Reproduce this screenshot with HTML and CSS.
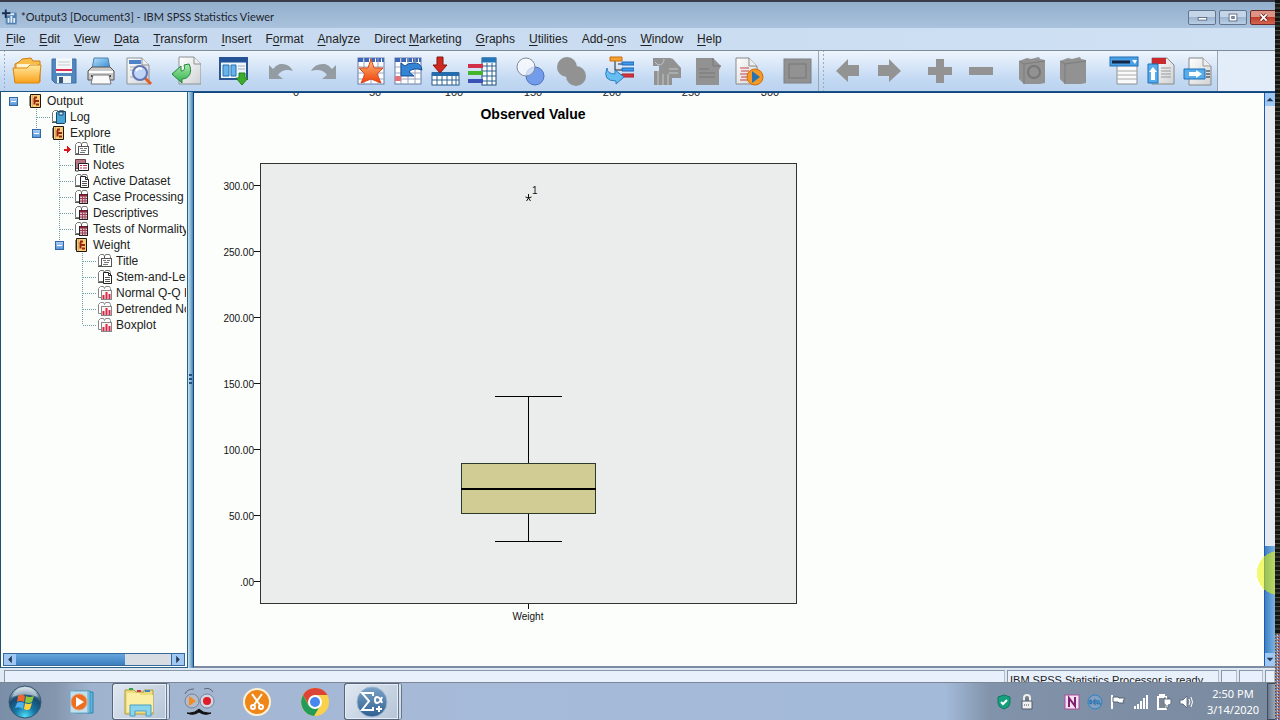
FILE: index.html
```html
<!DOCTYPE html>
<html lang="en">
<head>
<meta charset="utf-8">
<title>*Output3 [Document3] - IBM SPSS Statistics Viewer</title>
<link rel="stylesheet" href="styles.css">
</head>
<body>
<svg class="defs" aria-hidden="true">
  <defs>
    <linearGradient id="gSky" x1="0" y1="0" x2="1" y2="1"><stop offset="0" stop-color="#b5e1fb"/><stop offset="1" stop-color="#2f86d2"/></linearGradient>
    <linearGradient id="gFold" x1="0" y1="0" x2="0" y2="1"><stop offset="0" stop-color="#ffe9a0"/><stop offset="1" stop-color="#f9a11b"/></linearGradient>
    <linearGradient id="gPage" x1="0" y1="0" x2="1" y2="1"><stop offset="0" stop-color="#ffffff"/><stop offset="1" stop-color="#cfd2d4"/></linearGradient>
    <linearGradient id="gStar" x1="0" y1="0" x2="0" y2="1"><stop offset="0" stop-color="#fbc08f"/><stop offset=".5" stop-color="#f58040"/><stop offset="1" stop-color="#f0400c"/></linearGradient>
    <linearGradient id="gGreen" x1="0" y1="0" x2="0" y2="1"><stop offset="0" stop-color="#a8ecac"/><stop offset="1" stop-color="#2fb04a"/></linearGradient>
    <radialGradient id="gOrb" cx=".5" cy=".95" r=".9"><stop offset="0" stop-color="#4fe0f8"/><stop offset=".35" stop-color="#1678a8"/><stop offset=".7" stop-color="#174a70"/><stop offset="1" stop-color="#b5c7d4"/></radialGradient>
    <linearGradient id="gSpss" x1="0" y1="0" x2="0" y2="1"><stop offset="0" stop-color="#7ba3c8"/><stop offset="1" stop-color="#2f5f90"/></linearGradient>
    <symbol id="book" viewBox="0 0 16 14"><path d="M2.500 .5h10v13h-10z" fill="#f7cf78" stroke="#20160c"/><path d="M4.500 1v12" stroke="#e0a860"/><path d="M1 3h2M1 5h2M1 7h2M1 9h2M1 11h2" stroke="#222"/><path d="M6 3.500h3M6.500 4v6.500M7 7h4M8 10.500h3" stroke="#9a2413" stroke-width="2" fill="none"/></symbol>
    <symbol id="pages" viewBox="0 0 16 14"><path d="M1.500 11.500v-9l2-2h3l1 2 1-2h4l1 2v9z" fill="#fff" stroke="#777"/><path d="M1 12.500h7M7.500 2v10" stroke="#555"/></symbol>
    <symbol id="title" viewBox="0 0 16 14"><use href="#pages"/><rect x="4.500" y="4.500" width="10" height="8" fill="#fff" stroke="#555"/><path d="M6 6.500h3m1 0h3M7 8.500h5M6 10.500h5" stroke="#777"/></symbol>
    <symbol id="table" viewBox="0 0 16 14"><use href="#pages"/><rect x="5.500" y="4.500" width="8" height="9" fill="#e5c4cd" stroke="#222"/><path d="M6 5.500h7" stroke="#94213d" stroke-width="2"/><path d="M6 8.500h7M6 11h7M8.500 6v7M11 6v7" stroke="#9c4055"/></symbol>
    <symbol id="textpage" viewBox="0 0 16 14"><use href="#pages"/><path d="M6.500 2.500h5l3 3v8h-8zM11.500 2.500v3h3" fill="#fff" stroke="#222"/><path d="M8 7.500h5M8 9.500h5M8 11.500h5" stroke="#555"/></symbol>
    <symbol id="bars" viewBox="0 0 16 14"><path d="M1.500 11.500v-9l2-2h3l1 2 1-2h4l1 2v9z" fill="#fff" stroke="#888"/><rect x="4.500" y="4.500" width="10" height="9" fill="#fff4f5" stroke="#888"/><path d="M6.500 13v-4M9.500 13V6M12.500 13V8" stroke="#d42a48" stroke-width="2"/></symbol>
    <symbol id="notes" viewBox="0 0 16 14"><path d="M1.500 1.500h10v9h-10z" fill="#b77885" stroke="#70404b"/><path d="M1.500 4v9h3" fill="none" stroke="#333"/><path d="M4.500 5.500h10v7h-10z" fill="#fff" stroke="#222"/><path d="M6 7.500h2m1 0h4M6 10h2m1 0h4" stroke="#b3344c"/></symbol>
    <symbol id="log" viewBox="0 0 16 14"><use href="#pages"/><path d="M5.500 2.500l1-1h8v11l-1 1h-8z" fill="#49a4d8" stroke="#174766"/><path d="M8 2h4v3H8z" fill="#d9eef8" stroke="#174766"/></symbol>
    <symbol id="page" viewBox="0 0 30 30"><path d="M4 2h15l7 7v19H4z" fill="url(#gPage)" stroke="#8d9296"/><path d="M19 2v7h7" fill="#eee" stroke="#8d9296"/></symbol>
    <symbol id="grid" viewBox="0 0 30 30"><rect x="2" y="2" width="26" height="26" fill="#fff" stroke="#667ba8"/><path d="M2 4h26" stroke="#3d68b8" stroke-width="4" stroke-dasharray="5 1"/><path d="M2 11h26M2 17h26M2 23h26M8 2v26M15 2v26M22 2v26" stroke="#97a3bf"/></symbol>
    <symbol id="greybook" viewBox="0 0 30 30"><path d="M2 5l8-3 4 1 8-2 1 2 5 1v23l-5 1H7l-5-5z" fill="#929292"/><path d="M7 8v20M7 8l21-3M2 5l5 3" stroke="#7c7c7c" fill="none"/></symbol>
  </defs>
</svg>
<div class="screen">
<div class="desktop">
  <header class="titlebar">
    <svg class="app-icon" viewBox="0 0 16 16"><rect x="4" y="3" width="12" height="13" rx="2" fill="#4f7fb0" stroke="#88a7c5"/><path d="M7 14V9M10 14V7M13 14V9M5 5h8" stroke="#e2edf8" stroke-width="2"/><path d="M4 0v9M0 4h9" stroke="#172f52" stroke-width="2"/></svg>
    <h1>*Output3 [Document3] - IBM SPSS Statistics Viewer</h1>
    <div class="winbtns">
      <button aria-label="Minimize"><svg viewBox="0 0 28 15"><rect x="9.500" y="7.500" width="10" height="3" fill="#fff" stroke="#56657a"/></svg></button>
      <button aria-label="Maximize"><svg viewBox="0 0 28 15"><rect x="9.500" y="3.500" width="9" height="8" fill="#fff" stroke="#56657a"/><rect x="12.500" y="6.500" width="3" height="2" fill="#8ea8c6" stroke="#56657a"/></svg></button>
      <button class="close" aria-label="Close"><svg viewBox="0 0 28 15"><path d="M10 4l7 7M17 4l-7 7" stroke="#6c2a22" stroke-width="4"/><path d="M10 4l7 7M17 4l-7 7" stroke="#fff" stroke-width="2"/></svg></button>
    </div>
  </header>
  <nav class="menubar">
    <button><u>F</u>ile</button><button><u>E</u>dit</button><button><u>V</u>iew</button><button><u>D</u>ata</button><button><u>T</u>ransform</button><button><u>I</u>nsert</button><button>F<u>o</u>rmat</button><button><u>A</u>nalyze</button><button>Direct <u>M</u>arketing</button><button><u>G</u>raphs</button><button><u>U</u>tilities</button><button>Add-<u>o</u>ns</button><button><u>W</u>indow</button><button><u>H</u>elp</button>
  </nav>
  <div class="toolbars">
    <div class="toolbar" role="toolbar" aria-label="Main">
      <div class="group">
        <button aria-label="Open"><svg viewBox="0 0 30 30"><path d="M3 8l4-2 3-3 9-1 2 3h7v21H3z" fill="#f9bd4b" stroke="#ce7b10"/><path d="M5 8h20v10H5z" fill="#fff4cf"/><path d="M1 12h14l3-3h11l-2 18H3z" fill="url(#gFold)" stroke="#d8860f"/></svg></button>
        <button aria-label="Save"><svg viewBox="0 0 30 30"><path d="M3 3h24v24H6l-3-3z" fill="#4f86be" stroke="#3d6fa6"/><rect x="7" y="2" width="16" height="15" fill="#f4f7fa"/><path d="M9 6h12M9 9h12" stroke="#c3c9d0"/><path d="M7 14h16" stroke="#e02b52" stroke-width="2"/><path d="M8 20h14v7H8z" fill="#eef1f4"/><path d="M10 21h4v6h-4z" fill="#38577c"/></svg></button>
        <button aria-label="Print"><svg viewBox="0 0 30 30"><path d="M8 2h14l2 11H6z" fill="url(#gSky)" stroke="#4e80a8"/><path d="M6 11h18l4 4v9H2v-9z" fill="#c9c9c9" stroke="#555"/><path d="M3 16h24" stroke="#fff" stroke-width="2"/><path d="M5 20h20" stroke="#444" stroke-width="2"/><path d="M7 19h16l2 9H5z" fill="#fafafa" stroke="#777"/></svg></button>
        <button aria-label="Print Preview"><svg viewBox="0 0 30 30"><use href="#page"/><path d="M6 4h12v4H6z" fill="#4c83c9"/><path d="M7 11h12M7 14h8M7 21h6" stroke="#aaa"/><path d="M21 21l7 7" stroke="#e25c25" stroke-width="3"/><circle cx="17" cy="17" r="7" fill="#bad4f7" fill-opacity=".9" stroke="#6276b4" stroke-width="2"/><path d="M13 15q2-4 6-2" stroke="#fff" fill="none" stroke-width="2"/></svg></button>
      </div>
      <div class="group"><button aria-label="Export"><svg viewBox="0 0 30 30"><path d="M8 1h15l7 7v20H8z" fill="url(#gPage)" stroke="#8d9296"/><path d="M23 1v7h7" fill="#eee" stroke="#8d9296"/><path d="M18 8c4 8 0 15-7 15v4L1 18l9-8v5c4 0 4-3 3-6z" fill="url(#gGreen)" stroke="#218439"/></svg></button></div>
      <div class="group"><button aria-label="Recall Dialog"><svg viewBox="0 0 30 30"><rect x="1" y="2" width="27" height="21" fill="#edf6fd" stroke="#2c5690" stroke-width="2"/><path d="M1 4h27" stroke="#235299" stroke-width="5"/><path d="M4 9h6v11H4zM12 9h5v11h-5z" fill="#67b4ec" stroke="#286eae"/><path d="M19 10h7M19 13h7" stroke="#aab"/><path d="M20 17h6v5h3l-6 7-6-7h3z" fill="#3cad2d" stroke="#238219"/></svg></button></div>
      <div class="group loose">
        <button disabled aria-label="Undo"><svg viewBox="0 0 30 30"><path d="M2 9v14h14l-5-4q5-7 15-4-4-8-13-7-4 1-7 5z" fill="#939ba3"/></svg></button>
        <button disabled aria-label="Redo"><svg viewBox="0 0 30 30"><path d="M28 9v14H14l5-4Q14 12 3 15q4-8 14-7 4 1 7 5z" fill="#939ba3"/></svg></button>
      </div>
      <div class="group">
        <button aria-label="Go to Data"><svg viewBox="0 0 30 30"><use href="#grid"/><path d="M15 3l3 9h9l-6 6 4 9-10-4-10 4 4-9-6-6h9z" fill="url(#gStar)" stroke="#d84b18"/></svg></button>
        <button aria-label="Go to Case"><svg viewBox="0 0 30 30"><use href="#grid"/><path d="M2 20h6v5H2z" fill="#e87078"/><path d="M8 7v13h13l-5-4q4-5 13-2-1-8-9-7-5 0-8 3z" fill="#3384d2" stroke="#174e99"/></svg></button>
        <button aria-label="Go to Variable"><svg viewBox="0 0 30 30"><rect x="2" y="17" width="27" height="12" fill="#fff" stroke="#24588c"/><path d="M2 18h27" stroke="#246cab" stroke-width="4"/><path d="M2 24h27M7 20v9M12 20v9M17 20v9M22 20v9M26 20v9" stroke="#2c638f"/><path d="M7 1h6v8h4l-7 8-7-8h4z" fill="#cf281f" stroke="#871610"/></svg></button>
        <button aria-label="Variables"><svg viewBox="0 0 30 30"><rect x="15" y="2" width="14" height="27" fill="#fff" stroke="#1d4b79"/><path d="M15 4h14" stroke="#2478ba" stroke-width="5"/><path d="M15 10h14M15 15h14M15 20h14M15 25h14M20 7v22M25 7v22" stroke="#2b628f"/><path d="M1 10h15" stroke="#d22f48" stroke-width="4"/><path d="M1 17h15" stroke="#43b52c" stroke-width="4"/><path d="M1 25h15" stroke="#3a52b5" stroke-width="4"/></svg></button>
      </div>
      <div class="group loose">
        <button aria-label="Use Variable Sets"><svg viewBox="0 0 30 30"><circle cx="20" cy="20" r="9" fill="#739ceb" stroke="#496fc0"/><circle cx="11" cy="11" r="9" fill="#fff" fill-opacity=".65" stroke="#808b9c"/></svg></button>
        <button disabled aria-label="Show All Variables"><svg viewBox="0 0 30 30"><circle cx="11" cy="11" r="10" fill="#929292"/><circle cx="20" cy="20" r="10" fill="#929292"/></svg></button>
      </div>
      <div class="group"><button aria-label="Select Last Output"><svg viewBox="0 0 30 30"><path d="M11 4v10h8M14 8h5M14 19h5" stroke="#222" fill="none"/><path d="M6 1h12v4H6z" fill="#f5a12d" stroke="#c66e10"/><path d="M18 6h12v3H18zM18 12h12v3H18z" fill="#419aeb" stroke="#1c62b8"/><path d="M18 18h12v3H18z" fill="#df3440" stroke="#a2202a"/><path d="M3 12q0 6 8 6v-4l9 7-8 7v-3q-14 0-9-13z" fill="#66bef3" stroke="#2e7ec0"/></svg></button></div>
      <div class="group loose">
        <button disabled aria-label="Designate Window"><svg viewBox="0 0 30 30"><path d="M1 2h17l3 1 8 9v10H20v7H2V15h5v-5H1z" fill="#929292"/><path d="M12 3q0 6-6 6l-3-3M6 15v14M11 18v11M16 18v11M17 13h9M17 17h9" stroke="#c4c7ca" fill="none"/></svg></button>
        <button disabled aria-label="Associate"><svg viewBox="0 0 30 30"><path d="M3 2h17l8 8-2 4v15H3z" fill="#929292"/><path d="M6 13h10M6 17h16M6 21h16M20 2v8h8" stroke="#777" fill="none"/></svg></button>
        <button aria-label="Run Script"><svg viewBox="0 0 30 30"><path d="M2 2h13l8 8v18H2z" fill="url(#gPage)" stroke="#888"/><path d="M15 2v8h8" fill="#eee" stroke="#888"/><path d="M6 12h9M7 15h8M6 18h8M7 21h6M6 24h8" stroke="#c44" stroke-width="1"/><circle cx="21" cy="21" r="8" fill="#f49a25" stroke="#d16d08"/><path d="M18 15l8 6-8 6z" fill="#2a72ae"/></svg></button>
      </div>
      <div class="group"><button disabled aria-label="Edit"><svg viewBox="0 0 30 30"><rect x="2" y="3" width="27" height="24" fill="#929292" stroke="#7c8086"/><rect x="7" y="8" width="17" height="14" fill="none" stroke="#777"/></svg></button></div>
    </div>
    <div class="toolbar outline-bar" role="toolbar" aria-label="Outline">
      <div class="group loose">
        <button disabled aria-label="Promote"><svg viewBox="0 0 30 30"><path d="M3 15L15 3v6h11v11H15v6z" fill="#939393"/></svg></button>
        <button disabled aria-label="Demote"><svg viewBox="0 0 30 30"><path d="M27 15L15 3v6H4v11h11v6z" fill="#939393"/></svg></button>
      </div>
      <div class="group loose">
        <button disabled aria-label="Expand"><svg viewBox="0 0 30 30"><path d="M11 3h8v8h8v8h-8v8h-8v-8H3v-8h8z" fill="#939393"/></svg></button>
        <button disabled aria-label="Collapse"><svg viewBox="0 0 30 30"><path d="M3 11h24v8H3z" fill="#939393"/></svg></button>
      </div>
      <div class="group loose">
        <button disabled aria-label="Show"><svg viewBox="0 0 30 30"><use href="#greybook"/><circle cx="17" cy="16" r="6" fill="none" stroke="#777" stroke-width="2"/></svg></button>
        <button disabled aria-label="Hide"><svg viewBox="0 0 30 30"><use href="#greybook"/></svg></button>
      </div>
      <div class="group">
        <button aria-label="Insert Heading"><svg viewBox="0 0 30 30"><path d="M8 9h20v19H8z" fill="#fafafa" stroke="#8b9096"/><path d="M8 15h20M8 19h20M8 23h20" stroke="#aaa"/><rect x="1" y="1" width="28" height="9" fill="#4aa0e4" stroke="#216fb4"/><path d="M3 6h18" stroke="#122747" stroke-width="3"/><path d="M23 4h5l-2 4z" fill="#fff"/></svg></button>
        <button aria-label="Insert Title"><svg viewBox="0 0 30 30"><path d="M6 2h15l7 7v19H6z" fill="url(#gPage)" stroke="#888"/><path d="M6 2h14v6H6z" fill="#c82a2d"/><path d="M15 12h10M15 15h10M15 18h10M15 21h10" stroke="#999"/><path d="M2 8h10v19H2z" fill="#58acea" stroke="#1a71bc"/><path d="M7 11l4 5H9v8H5v-8H3z" fill="#fff"/></svg></button>
        <button aria-label="Insert Text"><svg viewBox="0 0 30 30"><path d="M6 2h14l8 8v19H6z" fill="url(#gPage)" stroke="#888"/><path d="M20 2v8h8" fill="#eee" stroke="#999"/><path d="M23 15h4M23 18h4M23 21h4" stroke="#222"/><path d="M1 13h21v10H1z" fill="#58acea" stroke="#1a71bc"/><path d="M6 16h7v-2l6 4-6 4v-2H6z" fill="#fff"/></svg></button>
      </div>
    </div>
  </div>
  <main class="workspace">
    <aside class="outline">
      <div class="tree">
        <ul>
          <li><div class="row"><button class="toggle" aria-label="Collapse Output"></button><svg><use href="#book"/></svg><span>Output</span></div>
            <ul>
              <li><div class="row"><i></i><svg><use href="#log"/></svg><span>Log</span></div></li>
              <li><div class="row"><button class="toggle" aria-label="Collapse Explore"></button><svg><use href="#book"/></svg><span>Explore</span></div>
                <ul>
                  <li><div class="row"><i class="current"></i><svg><use href="#title"/></svg><span>Title</span></div></li>
                  <li><div class="row"><i></i><svg><use href="#notes"/></svg><span>Notes</span></div></li>
                  <li><div class="row"><i></i><svg><use href="#textpage"/></svg><span>Active Dataset</span></div></li>
                  <li><div class="row"><i></i><svg><use href="#table"/></svg><span>Case Processing</span></div></li>
                  <li><div class="row"><i></i><svg><use href="#table"/></svg><span>Descriptives</span></div></li>
                  <li><div class="row"><i></i><svg><use href="#table"/></svg><span>Tests of Normality</span></div></li>
                  <li><div class="row"><button class="toggle" aria-label="Collapse Weight"></button><svg><use href="#book"/></svg><span>Weight</span></div>
                    <ul>
                      <li><div class="row"><i></i><svg><use href="#title"/></svg><span>Title</span></div></li>
                      <li><div class="row"><i></i><svg><use href="#textpage"/></svg><span>Stem-and-Le</span></div></li>
                      <li><div class="row"><i></i><svg><use href="#bars"/></svg><span>Normal Q-Q P</span></div></li>
                      <li><div class="row"><i></i><svg><use href="#bars"/></svg><span>Detrended No</span></div></li>
                      <li><div class="row"><i></i><svg><use href="#bars"/></svg><span>Boxplot</span></div></li>
                    </ul>
                  </li>
                </ul>
              </li>
            </ul>
          </li>
        </ul>
      </div>
      <div class="hscroll"><button aria-label="Scroll left"><svg viewBox="0 0 12 12"><path d="M8 2v8L4 6z"/></svg></button><div class="thumb"></div><div class="rest"></div><button aria-label="Scroll right"><svg viewBox="0 0 12 12"><path d="M4 2v8l4-4z"/></svg></button></div>
    </aside>
    <div class="splitter"><span></span></div>
    <section class="viewer">
      <div class="canvas">
        <svg class="chart" width="640" height="560" viewBox="0 0 640 560" role="img" aria-label="Boxplot of Weight">
          <g class="tick-text" text-anchor="middle"><text x="102" y="3">0</text><text x="181" y="3">50</text><text x="260" y="3">100</text><text x="339" y="3">150</text><text x="418" y="3">200</text><text x="497" y="3">250</text><text x="576" y="3">300</text></g>
          <text class="axis-title" x="339" y="26" text-anchor="middle">Observed Value</text>
          <rect x="66.500" y="70.500" width="536" height="440" fill="#ebecec" stroke="#333"/>
          <path d="M60 92.500h6M60 158.500h6M60 224.500h6M60 290.500h6M60 356.500h6M60 422.500h6M60 488.500h6M334.500 511v5" stroke="#111"/>
          <g class="axis-text" text-anchor="end"><text x="60" y="97">300.00</text><text x="60" y="163">250.00</text><text x="60" y="229">200.00</text><text x="60" y="295">150.00</text><text x="60" y="361">100.00</text><text x="60" y="427">50.00</text><text x="60" y="493">.00</text></g>
          <path d="M301 303.500h67M334.500 303v68M334.500 421v28M301 448.500h67" stroke="#000"/>
          <rect x="267.500" y="370.500" width="134" height="50" fill="#d1cc94" stroke="#2c3a2c"/>
          <path d="M267 396h135" stroke="#000" stroke-width="2"/>
          <path d="M334.500 105v-4M334.500 105l-3-1M334.500 105l3-1M334.500 105l-2 3M334.500 105l2 3" stroke="#111"/>
          <text class="axis-text" x="338" y="101">1</text>
          <text class="axis-text" x="334" y="527" text-anchor="middle">Weight</text>
        </svg>
      </div>
      <div class="vscroll"><button aria-label="Scroll up"><svg viewBox="0 0 12 12"><path d="M2 8h8L6 4z"/></svg></button><div class="rest"></div><div class="thumb"></div><button aria-label="Scroll down"><svg viewBox="0 0 12 12"><path d="M2 4h8L6 8z"/></svg></button><span class="pointer-halo"></span></div>
    </section>
  </main>
  <div class="status"><span class="fill"></span><span class="msg">IBM SPSS Statistics Processor is ready</span><span class="c1"></span><span class="c2"></span><span class="c3"></span></div>
  <footer class="taskbar">
    <button class="start" aria-label="Start"><svg viewBox="0 0 34 34"><circle cx="17" cy="17" r="16" fill="url(#gOrb)" stroke="#35566e"/><path d="M4 12Q8 2 17 2t13 10q-13-5-26 0z" fill="#fff" opacity=".45"/><path d="M10 11q3-3 7 0l-1 6q-4-2-7 0z" fill="#f1662c"/><path d="M18 11q4 2 8 0l-2 6q-4 2-7 0z" fill="#8dc63f"/><path d="M9 18q3-2 7 0l-1 6q-4-3-8-1z" fill="#4fb2ee"/><path d="M17 18q3 2 7 0l-2 6q-3 2-6 0z" fill="#ffd23c"/></svg></button>
    <button class="task" aria-label="Media Player"><svg viewBox="0 0 34 34"><path d="M12 7h15v21H12z" fill="#5bb3e0" stroke="#3184b0"/><path d="M9 6h15v22H9z" fill="#8cd0ef" stroke="#3d91bb"/><path d="M4 6h18v22H4z" fill="#c0e0ee" stroke="#6ea7c2"/><circle cx="13" cy="17" r="8" fill="#ee6d1f" stroke="#e4a27c"/><path d="M10 12l8 5-8 5z" fill="#fff"/></svg></button>
    <button class="task open stacked" aria-label="File Explorer"><svg viewBox="0 0 34 34"><path d="M2 8V5h9l2 2h8V5h9v24H2z" fill="#eddd7c" stroke="#b89a3c"/><path d="M4 8h12l2 2h12v17H4z" fill="#fbeea5"/><path d="M6 4h4" stroke="#32a84a" stroke-width="2"/><path d="M14 6h4" stroke="#cc3c32" stroke-width="2"/><path d="M22 6h5" stroke="#388acc" stroke-width="2"/><path d="M7 31V20h21v11h-5v-5H12v5z" fill="#8bd4ee" stroke="#4b9ec0"/></svg></button>
    <button class="task" aria-label="Screen Recorder"><svg viewBox="0 0 34 34"><circle cx="10" cy="16" r="7" fill="#b4bccb" stroke="#74839a"/><circle cx="25" cy="16" r="7" fill="#d2d8e2" stroke="#74839a"/><path d="M7 11l7 5-7 5z" fill="#f28b22"/><circle cx="25" cy="16" r="4" fill="#e01b2c"/><path d="M3 9q2-5 9-5M22 4q6-2 9 3" fill="none" stroke="#5d6675"/><path d="M5 28h3q5 0 9-4 4 4 9 4h3q-6 3-12-1-6 4-12 1z" fill="#111" stroke="#111"/></svg></button>
    <button class="task" aria-label="Screenshot Tool"><svg viewBox="0 0 34 34"><circle cx="17" cy="17" r="13" fill="#ee8717" stroke="#fff1d6" stroke-width="2"/><path d="M12 9l8 11M22 9l-8 11" stroke="#fff" stroke-width="2"/><circle cx="13" cy="22" r="2" fill="none" stroke="#fff" stroke-width="2"/><circle cx="21" cy="22" r="2" fill="none" stroke="#fff" stroke-width="2"/></svg></button>
    <button class="task" aria-label="Chrome"><svg viewBox="0 0 34 34"><circle cx="17" cy="17" r="14" fill="#fbd14b"/><path d="M17 3A14 14 0 0 1 29.500 10H17L11 20 5 10A14 14 0 0 1 17 3z" fill="#dc4437"/><path d="M5 10A14 14 0 0 0 16 31l6-10H11z" fill="#249c59"/><circle cx="17" cy="17" r="7" fill="#fff"/><circle cx="17" cy="17" r="5" fill="#4688f0"/></svg></button>
    <button class="task open stacked" aria-label="SPSS"><svg viewBox="0 0 34 34"><circle cx="17" cy="17" r="15" fill="url(#gSpss)" stroke="#9cb8d2"/><path d="M18 11V8H7l7 8-7 9h11v-3" fill="none" stroke="#fff" stroke-width="2"/><path d="M27 12q-2 6-5 6-2 0-2-3t2-3q3 0 5 6M24 21v6M21 24h6" fill="none" stroke="#fff" stroke-width="2"/></svg></button>
    <div class="tray">
      <svg viewBox="0 0 16 16"><path d="M8 1l6 2v6q0 4-6 6-6-2-6-6V3z" fill="#16a07b" stroke="#0d7a65"/><path d="M5 8l2 2 4-4" fill="none" stroke="#fff" stroke-width="2"/></svg>
      <svg class="after" viewBox="0 0 16 16"><path d="M5 7V4q0-3 3-3t3 3v3" fill="#737e89" stroke="#eee" stroke-width="2"/><path d="M3 7h10v8H3z" fill="#f1f1f1" stroke="#4c5866"/><path d="M5 11h6" stroke="#444" stroke-dasharray="1 1"/></svg>
      <svg viewBox="0 0 16 16"><rect x="1" y="1" width="14" height="14" fill="#f4e1f2" stroke="#ab4f9d"/><path d="M5 13V4l6 8V3" fill="none" stroke="#80206f" stroke-width="2"/></svg>
      <svg viewBox="0 0 16 16"><circle cx="8" cy="8" r="7" fill="#829fbd" stroke="#2583ca" stroke-width="1"/><path d="M3 6v4q2 0 2-2t-2-2M9 6H7v4h2M7 8h2M10 6v4h1M12 6v4h2" fill="none" stroke="#1668ad"/></svg>
      <svg viewBox="0 0 16 16"><path d="M2 1v14" stroke="#fff" stroke-width="2"/><path d="M3 3h5l1 1h6l-2 3 1 2H9L8 8H3z" fill="#fff" stroke="#566373"/></svg>
      <svg viewBox="0 0 16 16"><path d="M1 12h2v3H1zM4 10h2v5H4zM7 7h2v8H7zM10 4h2v11h-2zM13 1h2v14h-2z" fill="#fff"/></svg>
      <svg viewBox="0 0 16 16"><path d="M2 3h8v12H2zM4 1h4v2H4z" fill="#7b8795" stroke="#fff" stroke-width="2"/><path d="M8 5h7v4q0 2-3 2v3h-2v-3q-2 0-2-2zM9 3v2M13 3v2" fill="#fff" stroke="#637183"/></svg>
      <svg viewBox="0 0 16 16"><path d="M1 6h3l4-4v12l-4-4H1z" fill="#fff" stroke="#637183"/><path d="M10 5q2 3 0 6M12 3q3 5 0 10" fill="none" stroke="#fff"/></svg>
    </div>
    <div class="clock"><time>2:50 PM</time><span>3/14/2020</span></div>
    <button class="peek" aria-label="Show desktop"></button>
  </footer>
</div>
<div class="edge"></div>
</div>
</body>
</html>
```
FILE: styles.css
```css
* { box-sizing: border-box; }
body { margin: 0; font-family: "Liberation Sans", Arial, sans-serif; font-size: 12px; color: #222; }
button { font: inherit; color: inherit; border: 0; padding: 0; background: none; }
ul { list-style: none; margin: 0; padding: 0; }
.defs { position: absolute; width: 0; height: 0; }
.screen { display: flex; height: 100vh; overflow: hidden; }
.desktop { flex: 1; min-width: 0; display: flex; flex-direction: column; background: #cfe0f2; }

.titlebar { flex: none; height: 28px; display: flex; align-items: center; gap: 4px; padding: 4px 0 0 2px; border-top: 2px solid #383c48; background: linear-gradient(#93afcc, #a9c2dd); overflow: hidden; }
.titlebar h1 { flex: 1; margin: 0; font: 11px/16px Lato, "Noto Sans", sans-serif; color: #1c232c; }
.app-icon { width: 15px; height: 16px; }
.winbtns { flex: none; display: flex; gap: 3px; margin-right: -3px; }
.winbtns button { width: 28px; height: 15px; border: 1px solid #62758d; border-radius: 2px; background: linear-gradient(#c4d5e8 45%, #9db6d1 50%, #b9cfe5); }
.winbtns .close { border-color: #6c2b2b; background: linear-gradient(#dc9486 45%, #c03f2b 50%, #d46550); }
.winbtns svg { display: block; width: 26px; height: 13px; }

.menubar { flex: none; height: 22px; display: flex; gap: 14px; padding-left: 6px; background: linear-gradient(90deg, #c5d8ee, #cfe1f3); }
.menubar button { line-height: 22px; }
.menubar u { text-decoration-thickness: 1px; text-underline-offset: 2px; }

.toolbars { flex: none; display: flex; height: 42px; background: #e2edf9; border-top: 1px solid #808b98; border-bottom: 1px solid #1b5588; }
.toolbar { display: flex; align-items: center; gap: 18px; padding: 0 6px 0 12px; border-right: 1px solid #98a5b4; background: radial-gradient(circle, #9eacbe 1px, transparent 1px) 3px 2px / 3px 4px repeat-y, linear-gradient(#eef5fd, #c3d9f3 70%, #bbd3ef); }
.outline-bar { gap: 21px; padding-left: 14px; padding-right: 4px; }
.group { display: flex; gap: 7px; }
.loose { gap: 11px; }
.toolbar button, .toolbar svg { display: block; width: 30px; height: 30px; }

.workspace { flex: 1; min-height: 0; display: flex; }
.outline { flex: none; width: 188px; display: flex; flex-direction: column; border: 1px solid #2b6288; border-top: 0; border-left-color: #1f506e; background: #fcfefc; padding: 0 1px 1px; }
.tree { flex: 1; overflow: hidden; padding-top: 1px; white-space: nowrap; }
.tree > ul { padding-left: 4px; }
.tree li li { background: repeating-linear-gradient(#6f9ea8 0 1px, transparent 1px 2px) 7px 0 / 1px 100% no-repeat; }
.tree li li:last-child { background-size: 1px 8px; }
.tree ul ul { padding-left: 23px; }
.row { display: flex; align-items: center; height: 16px; }
.row svg { flex: none; width: 16px; height: 14px; margin-right: 3px; }
.row i { flex: none; width: 13px; height: 1px; margin: 0 1px 0 8px; background: repeating-linear-gradient(90deg, #6f9ea8 0 1px, transparent 1px 2px); }
.row i.current { height: 7px; background: linear-gradient(#d81a20, #d81a20) 4px 3px / 4px 2px no-repeat, conic-gradient(from 225deg at 100% 50%, #d81a20 90deg, transparent 0) 7px 0 / 4px 7px no-repeat; }
.toggle { flex: none; width: 9px; height: 9px; margin: 0 10px 0 3px; border: 1px solid #3268a6; background: linear-gradient(#fff, #fff) 1px 3px / 5px 1px no-repeat, linear-gradient(#a9cdf3, #5896db); }

.hscroll { flex: none; height: 13px; display: flex; margin: 0 1px; border: 1px solid #37689a; }
.hscroll button, .vscroll button { flex: none; width: 12px; height: 11px; background: #9fc8f4; }
.hscroll svg, .vscroll svg { display: block; width: 12px; height: 11px; fill: #243850; }
.thumb { background: linear-gradient(#66a4dc, #3b7fc0); }
.hscroll .thumb { flex: 7; }
.rest { background: #d8dce3; }
.hscroll .rest { flex: 3; border-right: 1px solid #37689a; }

.splitter { flex: none; width: 5px; display: flex; align-items: center; background: linear-gradient(90deg, #c8e6ee, #7dafd2 60%, #4c83b8); }
.splitter span { width: 3px; height: 12px; margin-left: 1px; background: repeating-linear-gradient(#204f80 0 2px, transparent 2px 4px); }
.viewer { flex: 1; min-width: 0; display: flex; border: 1px solid #12437c; border-right: 0; border-bottom: 2px solid #7e8ca3; }
.canvas { flex: 1; min-width: 0; overflow: hidden; background: #fcfefc; }
.chart { display: block; }
.tick-text { font-size: 11px; fill: #222; }
.axis-text { font-size: 10px; fill: #111; }
.axis-title { font-size: 14px; font-weight: bold; fill: #000; }
.vscroll { position: relative; flex: none; width: 11px; display: flex; flex-direction: column; border-left: 1px solid #1d58b2; }
.vscroll button, .vscroll svg { width: 10px; }
.vscroll button { height: 13px; }
.vscroll .rest { flex: 78; background: #e6e9f0; }
.vscroll .thumb { flex: 19; background: linear-gradient(90deg, #3c80c2, #7db2e3); }
.pointer-halo { position: absolute; right: 0; bottom: 71px; width: 18px; height: 44px; background: radial-gradient(circle at 22px 50%, #eaf500 22px, transparent 22px); opacity: .55; }

.status { flex: none; height: 14px; display: flex; gap: 2px; padding: 2px 0 0 4px; overflow: hidden; background: #dfe9f3; }
.status span { flex: none; height: 18px; border: 1px solid #8a97a6; border-right-color: #b4bfcb; background: #e8f1fb; line-height: 18px; }
.status .fill { flex: 1; }
.status .msg { width: 212px; padding-left: 2px; font-size: 11px; white-space: nowrap; }
.status .c1 { width: 16px; }
.status .c2 { width: 24px; }
.status .c3 { width: 10px; }

.taskbar { flex: none; height: 38px; display: flex; align-items: center; overflow: hidden; border-top: 1px solid #7c8694; background: linear-gradient(90deg, #7b8ea8, #8496ae 55px, #a0b3ce 90px, #a6bad8 400px, #a3bad9 945px, #8193aa 990px, #7a8a9f); }
.taskbar svg { display: block; }
.start { width: 50px; }
.start svg, .task svg { width: 34px; height: 34px; margin: auto; }
.task { width: 58px; height: 37px; }
.start + .task { margin-left: 4px; }
.open { border: 1px solid #56657b; border-radius: 3px; background: linear-gradient(135deg, #e0e8f1, #b5c4d8); box-shadow: inset 0 0 0 1px #e6edf5; }
.stacked { border-right: 4px double #66778d; }
.tray { margin-left: auto; display: flex; gap: 7px; padding-right: 12px; }
.tray svg { width: 16px; height: 16px; }
.tray .after { margin-right: 22px; }
.clock { display: flex; flex-direction: column; align-items: center; width: 52px; margin-right: 8px; font: 11px/16px "Noto Sans", sans-serif; color: #fff; }
.peek { width: 8px; height: 37px; border: 1px solid #3f4c5e; border-right: 0; background: linear-gradient(90deg, #6a798d, #98a7b8); }

.edge { flex: none; width: 5px; background: repeating-conic-gradient(#b35c80 0 12%, #6fa377 0 30%, #e0dcd4 0 46%, #5f6fb0 0 63%, #4a4a44 0 80%, #bfa06d 0 100%) 0 100% / 3px 3px; }
.edge::before { content: ""; display: block; height: 88%; background: repeating-linear-gradient(#12120e 0 3px, #4d5347 3px 4px, #1a1b16 4px 7px, #34382f 7px 9px); }
```
